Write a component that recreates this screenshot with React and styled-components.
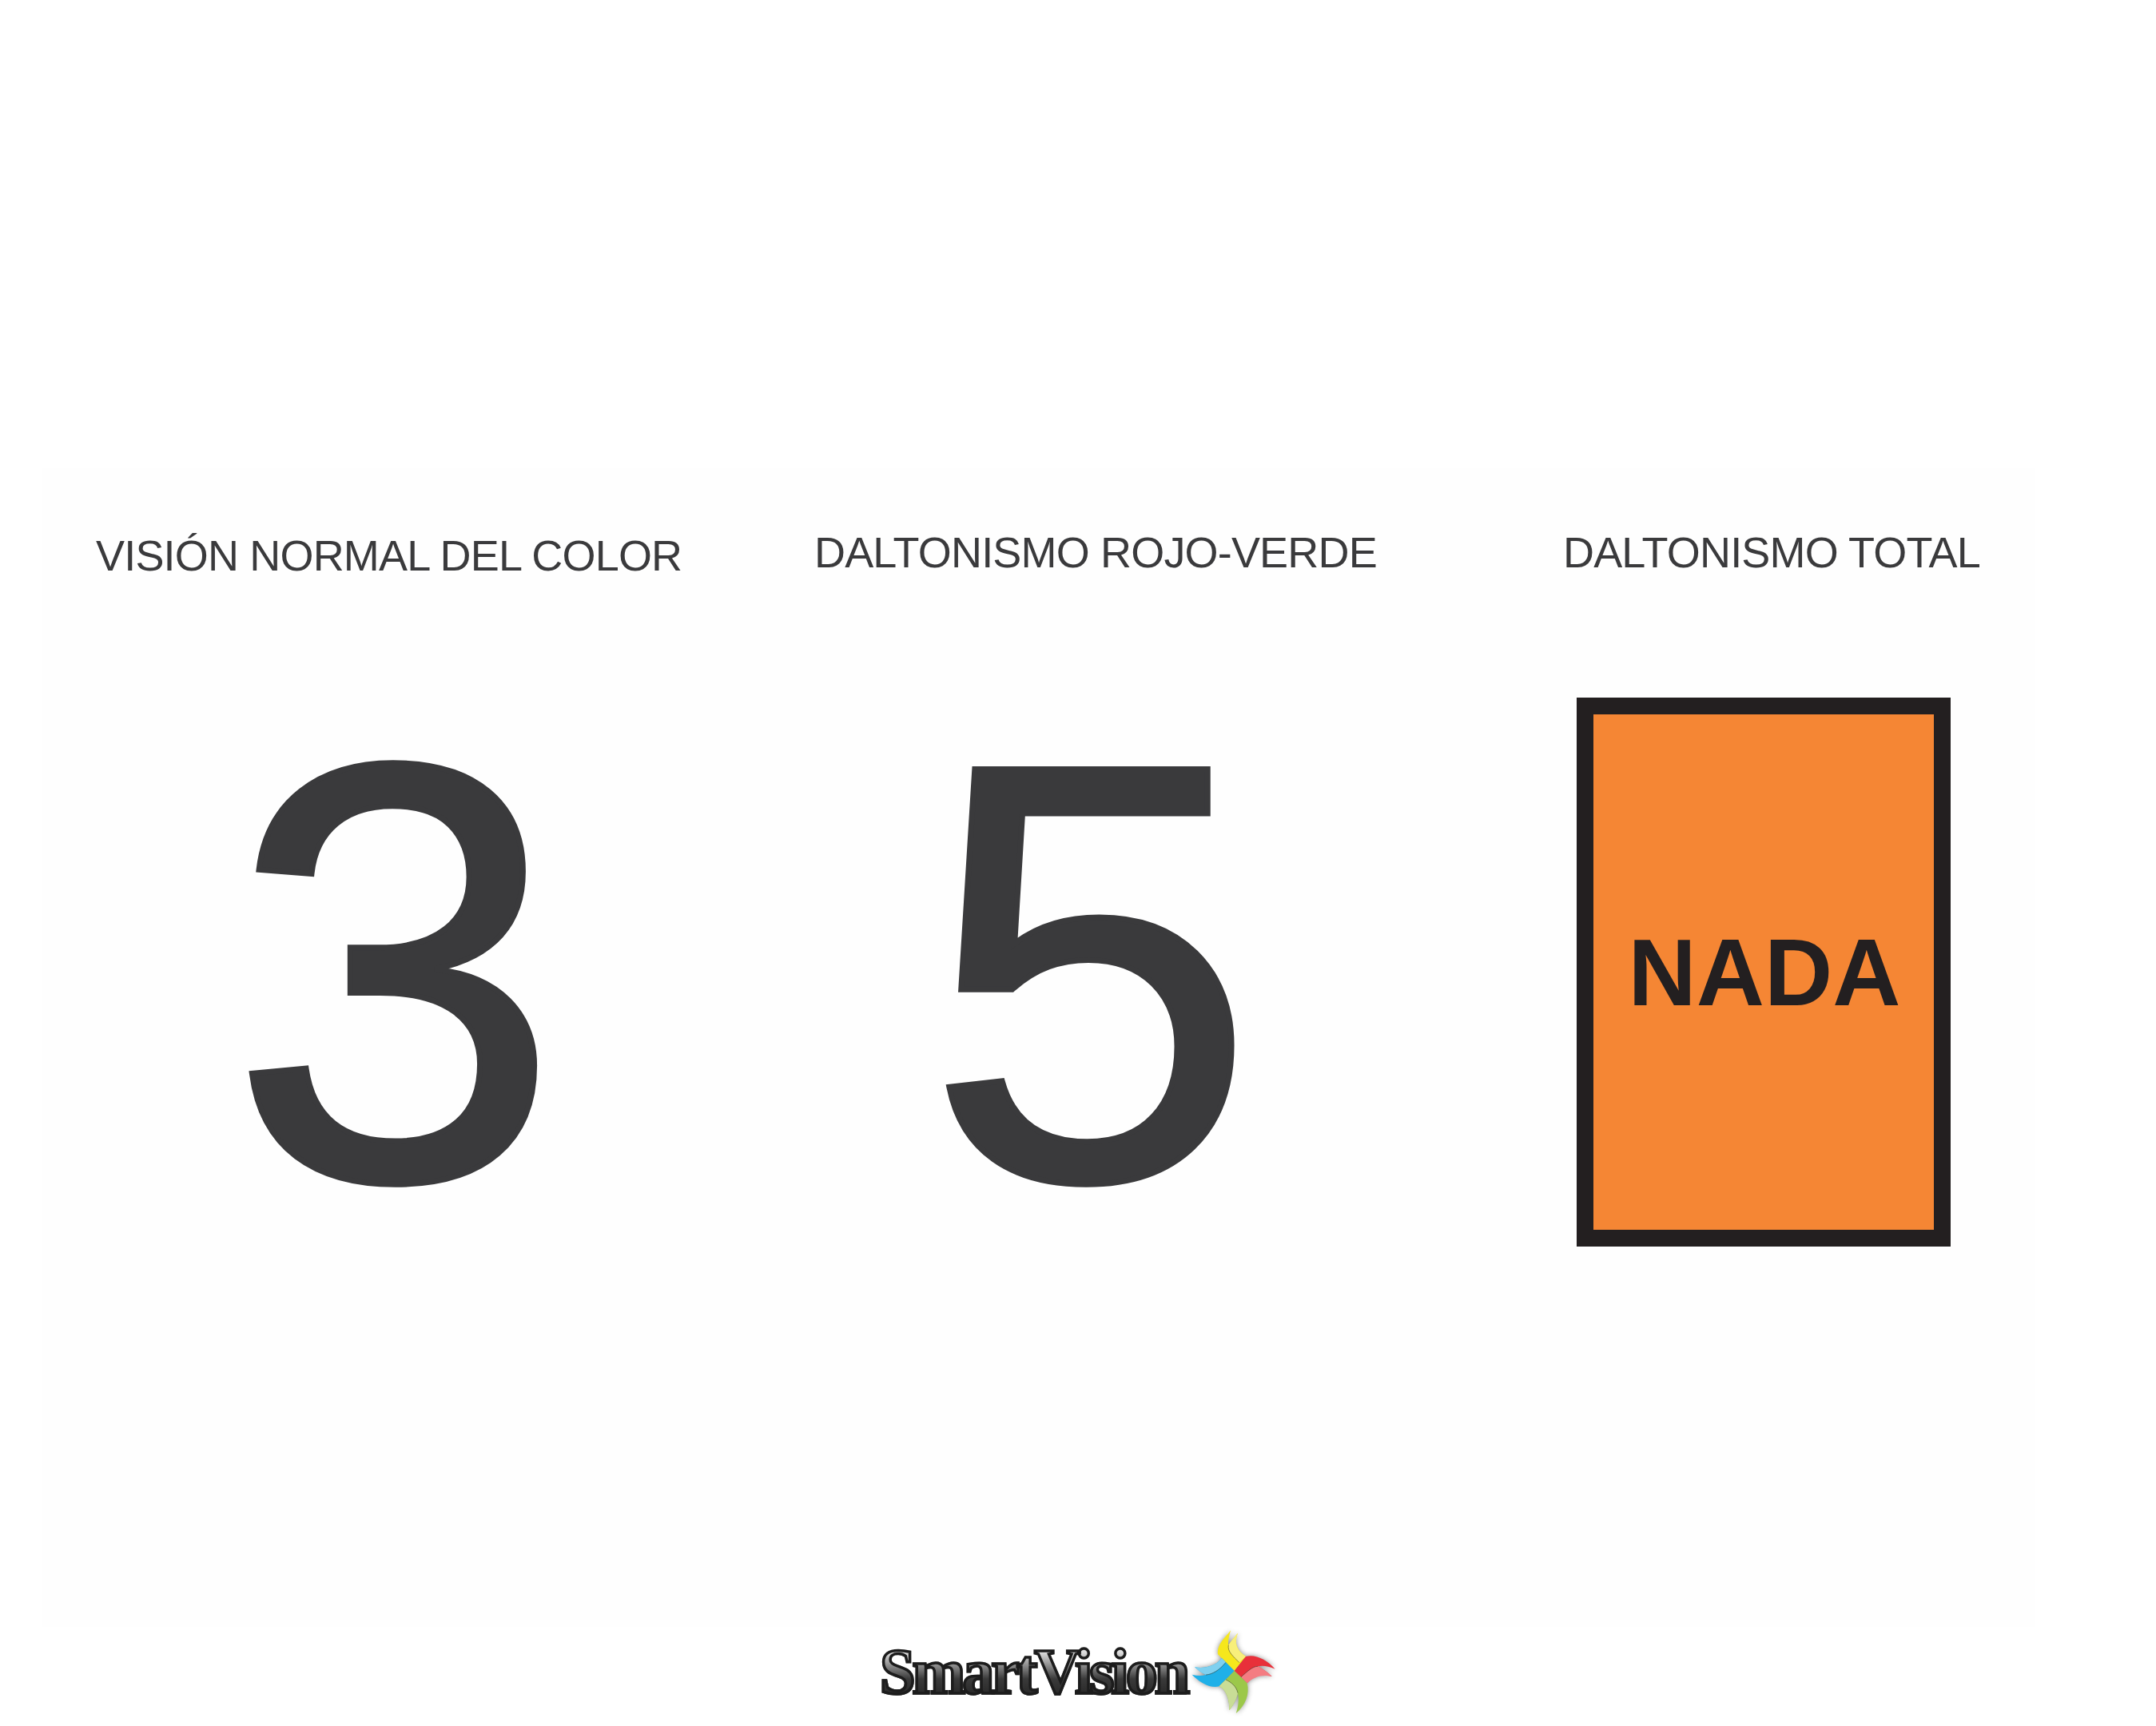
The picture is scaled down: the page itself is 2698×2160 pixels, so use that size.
import React from 'react'
import styled, { createGlobalStyle } from 'styled-components'

const Global = createGlobalStyle`
    html, body {
        margin: 0;
        background: #ffffff;
    }
`

const Page = styled.div`
    width: 2698px;
    height: 2160px;
    display: flex;
    flex-direction: column;
    overflow: hidden;
    font-family: "Liberation Sans", Arial, sans-serif;
    color: #3a3a3c;
`

const Board = styled.main`
    margin: 586px 0 0 52px;
    height: 1450px;
    background: #fefefe;
    display: grid;
    grid-template-columns: 928px 776px 1fr;
    width: 2494px;
`

const Column = styled.section`
    display: flex;
    flex-direction: column;
`

const Heading = styled.h2`
    margin: ${props => props.$top}px 0 0 ${props => props.$left}px;
    font-size: 54px;
    font-weight: 400;
    line-height: 60px;
    letter-spacing: -0.82px;
    white-space: nowrap;
`

const Digit = styled.div`
    margin: ${props => props.$top}px 0 0 ${props => props.$left}px;
    font-size: 745px;
    line-height: 745px;
    height: 745px;
    -webkit-text-stroke: 7px #3a3a3c;
`

const Sign = styled.div`
    margin: 152px 0 0 ${props => props.$left}px;
    width: 468px;
    height: 687px;
    box-sizing: border-box;
    border: 21px solid #231f20;
    background: #f58634;
    color: #231f20;
    display: flex;
    align-items: center;
    justify-content: center;
    font-size: 118px;
    font-weight: 700;
    line-height: 1;
    padding: 0 0 0 2px;
`

const Footer = styled.footer`
    margin: 0 0 0 1101px;
    display: flex;
    align-items: center;
`

const Brand = styled.span`
    font-family: "Liberation Serif", "Times New Roman", serif;
    font-size: 80px;
    font-weight: 700;
    line-height: 112px;
    letter-spacing: -4px;
    -webkit-text-stroke: 3.5px #1c1c1c;
    background: linear-gradient(180deg, #9a9a9a 0%, #e0e0e0 28%, #3a3a3a 58%, #111111 100%);
    -webkit-background-clip: text;
    background-clip: text;
    color: transparent;
`

const Mark = styled.svg`
    width: 110px;
    height: 110px;
    margin-left: 4px;
    filter: drop-shadow(0 0 3px rgba(0, 0, 0, 0.45));
`

const Pinwheel = () => (
    <Mark viewBox="30 20 330 330">
        <path fill="#f6e71c" d="M197 182L135 120C130 85 160 60 183 30C178 50 172 70 175 85C185 70 198 55 210 40C195 75 205 105 240 128Z" />
        <path fill="#f8ef7a" d="M175 85C185 70 198 55 210 40C195 75 205 105 240 128L215 150C195 130 170 110 175 85Z" />
        <path fill="#e8303a" d="M197 182L240 128C275 118 320 140 350 175C325 165 305 160 285 165C305 175 325 190 338 203C300 195 275 195 245 228Z" />
        <path fill="#f47c82" d="M222 205C245 185 265 165 285 165C305 175 325 190 338 203C300 195 270 205 245 228Z" />
        <path fill="#1fb0e8" d="M197 182L150 135C125 165 85 175 48 168C60 180 75 190 90 197C72 202 55 200 38 196C65 225 110 250 140 240Z" />
        <path fill="#7fd0ef" d="M150 135C125 165 85 175 48 168C60 180 75 190 90 197C115 195 140 180 165 150Z" />
        <path fill="#9cc84a" d="M197 182L140 240C165 250 180 290 178 330C190 315 205 290 210 265C215 290 212 315 203 342C240 310 255 270 245 228Z" />
        <path fill="#c9dd96" d="M140 240C165 250 180 290 178 330C190 315 205 290 210 265C205 240 185 225 165 215Z" />
        <path fill="none" stroke="#2b2b1a" strokeWidth="1.5" d="M175 85C170 110 195 130 215 150M285 165C265 165 245 185 222 205M90 197C115 195 140 180 165 150M210 265C205 240 185 225 165 215" />
    </Mark>
)

export default function App() {
    return (
        <Page>
            <Global />
            <Board>
                <Column>
                    <Heading $top={79} $left={68}>VISIÓN NORMAL DEL COLOR</Heading>
                    <Digit $top={120} $left={235}>3</Digit>
                </Column>
                <Column>
                    <Heading $top={75} $left={39}>DALTONISMO ROJO-VERDE</Heading>
                    <Digit $top={124} $left={178}>5</Digit>
                </Column>
                <Column>
                    <Heading $top={75} $left={200}>DALTONISMO TOTAL</Heading>
                    <Sign $left={217}>NADA</Sign>
                </Column>
            </Board>
            <Footer>
                <Brand>SmartVision</Brand>
                <Pinwheel />
            </Footer>
        </Page>
    )
}
